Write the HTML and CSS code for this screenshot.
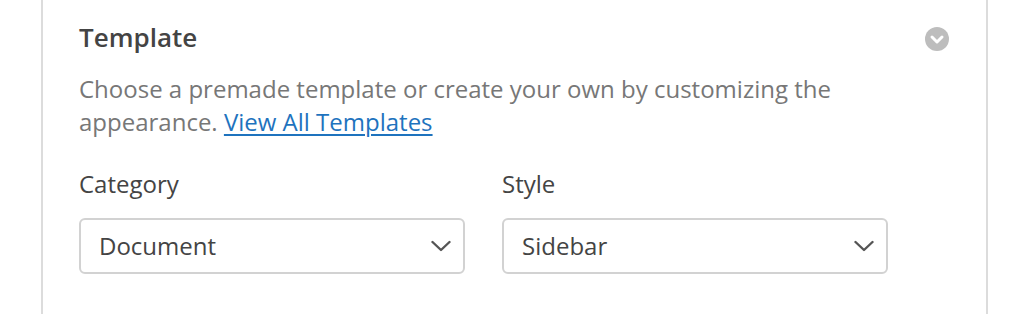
FILE: index.html
```html
<!DOCTYPE html>
<html lang="en">
<head>
<meta charset="utf-8">
<title>Template</title>
<link rel="stylesheet" href="styles.css">
</head>
<body>
<div class="panel">
  <div class="panel-head">
    <h2 class="title">Template</h2>
    <span class="toggle" aria-label="Toggle">
      <svg viewBox="0 0 24 24" width="24" height="24"><circle cx="12" cy="12" r="12" fill="#bdbdbd"/><path d="M7 10 L12 15 L17 10" fill="none" stroke="#fff" stroke-width="3" stroke-linecap="round" stroke-linejoin="round"/></svg>
    </span>
  </div>
  <p class="desc">Choose a premade template or create your own by customizing the appearance. <a href="#" class="link">View All Templates</a></p>
  <div class="fields">
    <div class="field">
      <div class="label">Category</div>
      <div class="select"><span class="value">Document</span>
        <svg class="chev" viewBox="0 0 20 12" width="20" height="12"><path d="M1.5 2 L10 10 L18.5 2" fill="none" stroke="#555" stroke-width="2.4" stroke-linecap="round" stroke-linejoin="round"/></svg>
      </div>
    </div>
    <div class="field">
      <div class="label">Style</div>
      <div class="select"><span class="value">Sidebar</span>
        <svg class="chev" viewBox="0 0 20 12" width="20" height="12"><path d="M1.5 2 L10 10 L18.5 2" fill="none" stroke="#555" stroke-width="2.4" stroke-linecap="round" stroke-linejoin="round"/></svg>
      </div>
    </div>
  </div>
</div>
</body>
</html>
```
FILE: styles.css
```css
html, body {
  margin: 0;
  padding: 0;
  background: #fff;
}
body {
  font-family: "Open Sans", "Noto Sans", sans-serif;
  color: #444;
}
.panel {
  box-sizing: content-box;
  margin-left: 41px;
  width: 871px;
  height: 314px;
  border-left: 2px solid #dcdcdc;
  border-right: 2px solid #dcdcdc;
  padding: 0 36px;
}
.panel-head {
  display: flex;
  justify-content: space-between;
  align-items: center;
  padding-top: 19px;
}
.title {
  margin: 0;
  font-size: 26px;
  font-weight: 600;
  line-height: 36px;
  color: #444;
}
.toggle {
  display: block;
  width: 24px;
  height: 24px;
  margin-top: 3px;
  margin-right: 1px;
}
.toggle svg { display: block; }
.desc {
  margin: 17px 0 0;
  font-size: 24px;
  line-height: 33px;
  color: #777;
  width: 820px;
}
.link {
  color: #1e73be;
  text-decoration: underline;
  text-underline-offset: 3px;
}
.fields {
  display: flex;
  gap: 37px;
  margin-top: 31px;
}
.field {
  width: 386px;
}
.label {
  font-size: 24px;
  line-height: 30px;
  color: #444;
  margin-bottom: 19px;
}
.select {
  box-sizing: border-box;
  height: 56px;
  border: 2px solid #d2d2d2;
  border-radius: 6px;
  display: flex;
  align-items: center;
  justify-content: space-between;
  padding: 0 12px 0 18px;
}
.value {
  font-size: 24px;
  line-height: 32px;
  color: #444;
}
.chev { display: block; }
```
